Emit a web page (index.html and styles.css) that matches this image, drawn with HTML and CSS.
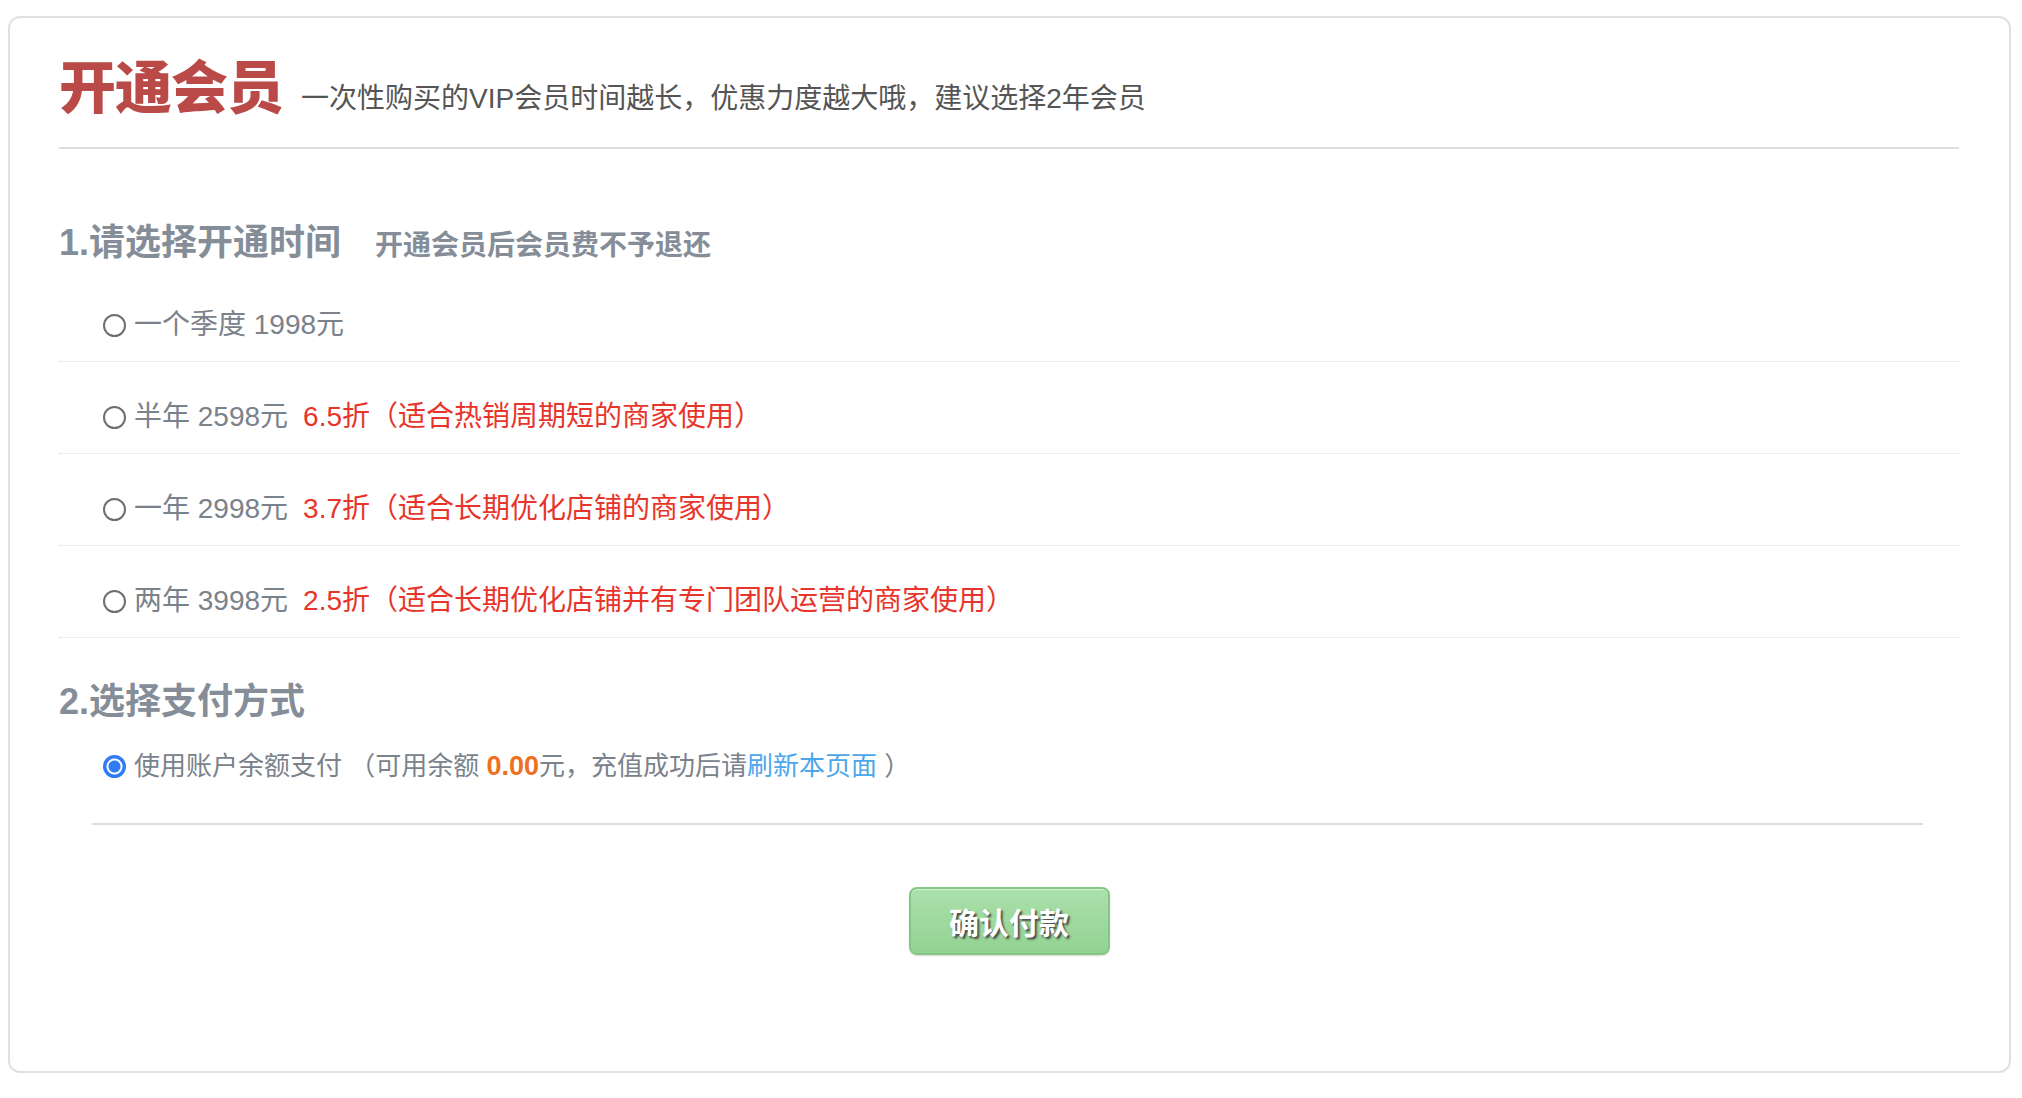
FILE: index.html
```
<!DOCTYPE html>
<html>
    <head>
        <meta charset="utf-8">
        <title>开通会员</title>
        <link rel="stylesheet" href="styles.css">
    </head>
    <body>
        <div class="panel">
            <div class="head">
                <h1>开通会员</h1>
                <span class="tip">一次性购买的VIP会员时间越长，优惠力度越大哦，建议选择2年会员</span>
            </div>

            <h2 class="step">1.请选择开通时间<small>开通会员后会员费不予退还</small></h2>
            <ul class="plans">
                <li><label><input type="radio" name="plan"><span>一个季度 1998元</span></label></li>
                <li><label><input type="radio" name="plan"><span>半年 2598元</span></label><span class="off">6.5折（适合热销周期短的商家使用）</span></li>
                <li><label><input type="radio" name="plan"><span>一年 2998元</span></label><span class="off">3.7折（适合长期优化店铺的商家使用）</span></li>
                <li><label><input type="radio" name="plan"><span>两年 3998元</span></label><span class="off">2.5折（适合长期优化店铺并有专门团队运营的商家使用）</span></li>
            </ul>

            <h2 class="step">2.选择支付方式</h2>
            <div class="pay">
                <label><input type="radio" name="pay" checked><span>使用账户余额支付 （可用余额 <b>0.00</b>元，充值成功后请<a href="#">刷新本页面</a> ）</span></label>
            </div>

            <div class="submit">
                <button type="button">确认付款</button>
            </div>
        </div>
    </body>
</html>
```

FILE: styles.css
```
*        { box-sizing: border-box; }
body     { margin: 0; background: #fff; font-family: "Liberation Sans", "Noto Sans CJK SC", sans-serif; color: #7a828b; }

.panel   { margin: 16px 11px 0 8px; padding: 0 50px 116px 49px; border: 2px solid #e1e1e1; border-radius: 12px; }

.head    { display: flex; align-items: baseline; padding-top: 38px; padding-bottom: 27px; border-bottom: 2px solid #dddddd; }
.head h1 { margin: 0; font-size: 57px; line-height: 64px; font-weight: 900; color: #b94a48; letter-spacing: -1px; }
.tip     { margin-left: 18px; font-size: 28px; color: #555; }

.step       { display: flex; align-items: baseline; margin: 70px 0 0; font-size: 36px; line-height: 48px; font-weight: bold; color: #858e98; }
.step small { margin-left: 34px; font-size: 28px; font-weight: bold; }
.step + .pay { margin-top: 20px; }

.plans    { list-style: none; margin: 0; padding: 0; }
.plans li { display: flex; align-items: center; padding: 35px 0 16px 44px; line-height: 40px; font-size: 28px; border-bottom: 1px dotted #dcdcdc; }
.plans + .step { margin-top: 40px; }

label    { display: inline-flex; align-items: center; }
input[type=radio] { appearance: none; -webkit-appearance: none; flex: none; width: 23px; height: 23px; margin: 0 8px 0 0; border: 2px solid #6e6e6e; border-radius: 50%; background: #fff; }
input[type=radio]:checked { border: 2px solid #2f7cf6; background: radial-gradient(circle, #2f7cf6 0 5.5px, #fff 6.5px 7.5px, #2f7cf6 8.5px); }

.off     { margin-left: 15px; color: #e8352b; }

.pay     { margin: 0 36px 0 33px; padding: 0 0 34px 11px; font-size: 26px; line-height: 40px; border-bottom: 2px solid #dddddd; }
.pay b   { font-weight: bold; color: #ee7020; font-size: 27px; }
.pay a   { color: #4ba6ec; text-decoration: none; }

.submit  { display: flex; justify-content: center; padding-top: 62px; }
.submit button { width: 201px; height: 68px; border: 2px solid #84c684; border-radius: 8px; background: linear-gradient(#abe0ab, #93d293); box-shadow: inset 0 1px 0 rgba(255,255,255,0.5), 0 1px 2px rgba(0,0,0,0.15); font-family: inherit; font-size: 30px; font-weight: bold; color: #fff; text-shadow: 2px 2px 2px #4a4a4a; cursor: pointer; }
```
